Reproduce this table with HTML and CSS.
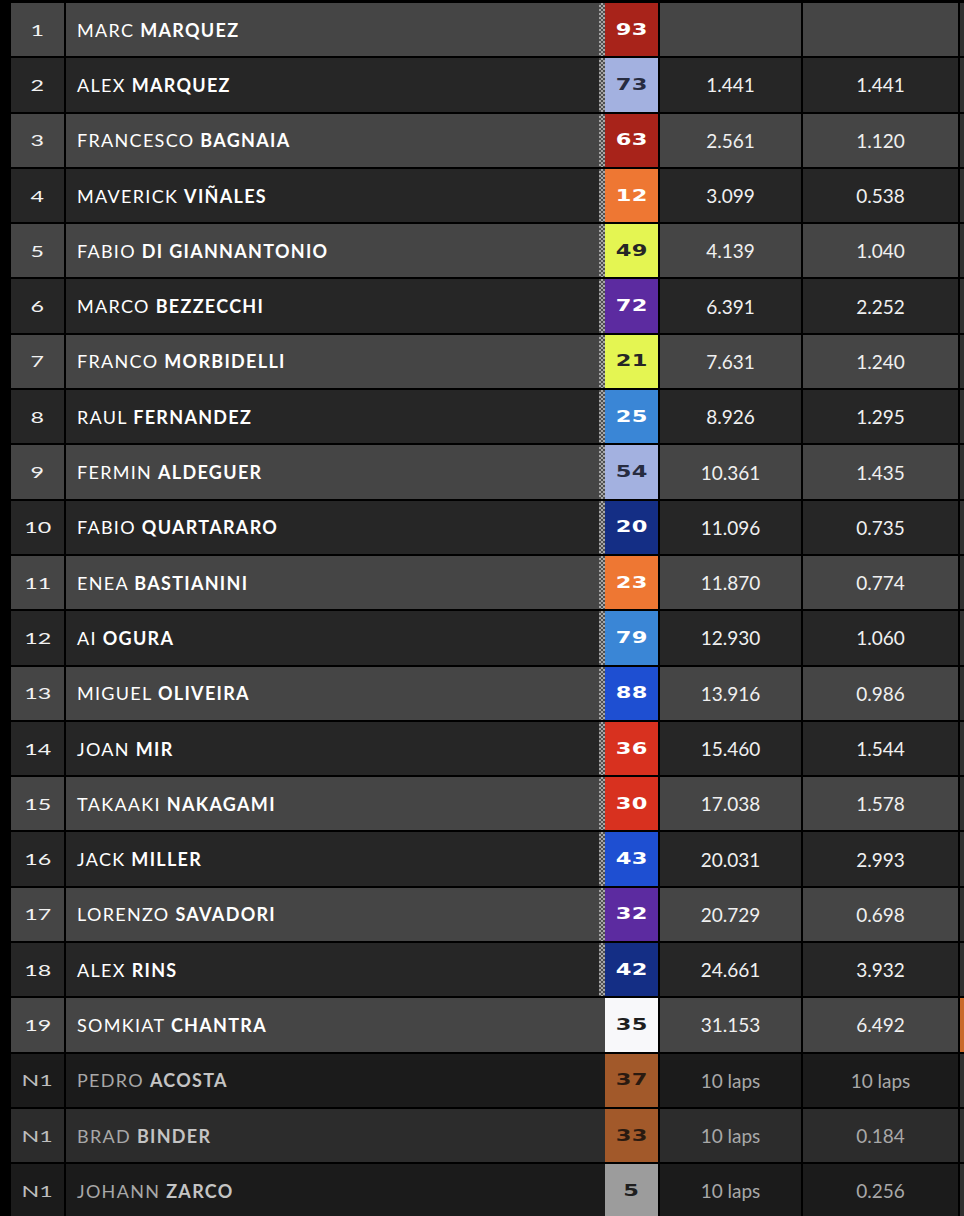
FILE: index.html
```html
<!DOCTYPE html>
<html lang="en">
<head>
<meta charset="utf-8">
<title>Race Classification</title>
<link rel="stylesheet" href="styles.css">
</head>
<body>
<div class="table">
  <div class="row light"><div class="pos"><span>1</span></div><div class="rider"><div class="name">MARC <b>MARQUEZ</b></div><div class="flag"></div><div class="num red"><span>93</span></div></div><div class="time"></div><div class="time"></div><div class="edge"></div></div>
  <div class="row dark"><div class="pos"><span>2</span></div><div class="rider"><div class="name">ALEX <b>MARQUEZ</b></div><div class="flag"></div><div class="num lav"><span>73</span></div></div><div class="time">1.441</div><div class="time">1.441</div><div class="edge"></div></div>
  <div class="row light"><div class="pos"><span>3</span></div><div class="rider"><div class="name">FRANCESCO <b>BAGNAIA</b></div><div class="flag"></div><div class="num red"><span>63</span></div></div><div class="time">2.561</div><div class="time">1.120</div><div class="edge"></div></div>
  <div class="row dark"><div class="pos"><span>4</span></div><div class="rider"><div class="name">MAVERICK <b>VIÑALES</b></div><div class="flag"></div><div class="num orange"><span>12</span></div></div><div class="time">3.099</div><div class="time">0.538</div><div class="edge"></div></div>
  <div class="row light"><div class="pos"><span>5</span></div><div class="rider"><div class="name">FABIO <b>DI GIANNANTONIO</b></div><div class="flag"></div><div class="num lime"><span>49</span></div></div><div class="time">4.139</div><div class="time">1.040</div><div class="edge"></div></div>
  <div class="row dark"><div class="pos"><span>6</span></div><div class="rider"><div class="name">MARCO <b>BEZZECCHI</b></div><div class="flag"></div><div class="num purple"><span>72</span></div></div><div class="time">6.391</div><div class="time">2.252</div><div class="edge"></div></div>
  <div class="row light"><div class="pos"><span>7</span></div><div class="rider"><div class="name">FRANCO <b>MORBIDELLI</b></div><div class="flag"></div><div class="num lime"><span>21</span></div></div><div class="time">7.631</div><div class="time">1.240</div><div class="edge"></div></div>
  <div class="row dark"><div class="pos"><span>8</span></div><div class="rider"><div class="name">RAUL <b>FERNANDEZ</b></div><div class="flag"></div><div class="num sky"><span>25</span></div></div><div class="time">8.926</div><div class="time">1.295</div><div class="edge"></div></div>
  <div class="row light"><div class="pos"><span>9</span></div><div class="rider"><div class="name">FERMIN <b>ALDEGUER</b></div><div class="flag"></div><div class="num lav"><span>54</span></div></div><div class="time">10.361</div><div class="time">1.435</div><div class="edge"></div></div>
  <div class="row dark"><div class="pos"><span>10</span></div><div class="rider"><div class="name">FABIO <b>QUARTARARO</b></div><div class="flag"></div><div class="num navy"><span>20</span></div></div><div class="time">11.096</div><div class="time">0.735</div><div class="edge"></div></div>
  <div class="row light"><div class="pos"><span>11</span></div><div class="rider"><div class="name">ENEA <b>BASTIANINI</b></div><div class="flag"></div><div class="num orange"><span>23</span></div></div><div class="time">11.870</div><div class="time">0.774</div><div class="edge"></div></div>
  <div class="row dark"><div class="pos"><span>12</span></div><div class="rider"><div class="name">AI <b>OGURA</b></div><div class="flag"></div><div class="num sky"><span>79</span></div></div><div class="time">12.930</div><div class="time">1.060</div><div class="edge"></div></div>
  <div class="row light"><div class="pos"><span>13</span></div><div class="rider"><div class="name">MIGUEL <b>OLIVEIRA</b></div><div class="flag"></div><div class="num royal"><span>88</span></div></div><div class="time">13.916</div><div class="time">0.986</div><div class="edge"></div></div>
  <div class="row dark"><div class="pos"><span>14</span></div><div class="rider"><div class="name">JOAN <b>MIR</b></div><div class="flag"></div><div class="num scarlet"><span>36</span></div></div><div class="time">15.460</div><div class="time">1.544</div><div class="edge"></div></div>
  <div class="row light"><div class="pos"><span>15</span></div><div class="rider"><div class="name">TAKAAKI <b>NAKAGAMI</b></div><div class="flag"></div><div class="num scarlet"><span>30</span></div></div><div class="time">17.038</div><div class="time">1.578</div><div class="edge"></div></div>
  <div class="row dark"><div class="pos"><span>16</span></div><div class="rider"><div class="name">JACK <b>MILLER</b></div><div class="flag"></div><div class="num royal"><span>43</span></div></div><div class="time">20.031</div><div class="time">2.993</div><div class="edge"></div></div>
  <div class="row light"><div class="pos"><span>17</span></div><div class="rider"><div class="name">LORENZO <b>SAVADORI</b></div><div class="flag"></div><div class="num purple"><span>32</span></div></div><div class="time">20.729</div><div class="time">0.698</div><div class="edge"></div></div>
  <div class="row dark"><div class="pos"><span>18</span></div><div class="rider"><div class="name">ALEX <b>RINS</b></div><div class="flag"></div><div class="num navy"><span>42</span></div></div><div class="time">24.661</div><div class="time">3.932</div><div class="edge"></div></div>
  <div class="row light"><div class="pos"><span>19</span></div><div class="rider"><div class="name">SOMKIAT <b>CHANTRA</b></div><div class="noflag"></div><div class="num white"><span>35</span></div></div><div class="time">31.153</div><div class="time">6.492</div><div class="edge orange-edge"></div></div>
  <div class="row out darkest"><div class="pos"><span>N1</span></div><div class="rider"><div class="name">PEDRO <b>ACOSTA</b></div><div class="noflag"></div><div class="num brown"><span>37</span></div></div><div class="time">10 laps</div><div class="time">10 laps</div><div class="edge"></div></div>
  <div class="row out mid"><div class="pos"><span>N1</span></div><div class="rider"><div class="name">BRAD <b>BINDER</b></div><div class="noflag"></div><div class="num brown"><span>33</span></div></div><div class="time">10 laps</div><div class="time">0.184</div><div class="edge"></div></div>
  <div class="row out darkest"><div class="pos"><span>N1</span></div><div class="rider"><div class="name">JOHANN <b>ZARCO</b></div><div class="noflag"></div><div class="num grey"><span>5</span></div></div><div class="time">10 laps</div><div class="time">0.256</div><div class="edge"></div></div>
</div>
</body>
</html>
```

FILE: styles.css
```css
html, body {
  margin: 0;
  padding: 0;
  background: #000;
}
body {
  width: 964px;
  height: 1216px;
  overflow: hidden;
}
.table {
  display: grid;
  grid-auto-rows: 53.3px;
  row-gap: 2px;
  padding: 3px 0 0 11px;
  font-family: "Lato", "Noto Sans", sans-serif;
  color: #fff;
}
.row {
  display: grid;
  grid-template-columns: 53px 592px 141px 155px 10px;
  column-gap: 2px;
}
.row > div { background: var(--bg); }
.light { --bg: #454545; }
.dark { --bg: #262626; }
.darkest { --bg: #1b1b1b; }
.mid { --bg: #2c2c2c; }

.pos {
  display: flex;
  align-items: center;
  justify-content: center;
}
.pos span {
  font-family: "Lato", sans-serif;
  font-size: 15px;
  font-weight: 400;
  display: inline-block;
  transform: scaleX(1.55);
  color: #f2f2f2;
}
.rider {
  display: flex;
}
.row > .rider { background: transparent; }
.name {
  flex: 1;
  background: var(--bg);
  display: flex;
  align-items: center;
  padding-left: 11px;
  font-size: 18px;
  font-weight: 400;
  letter-spacing: 1.3px;
  white-space: pre;
}
.name b { font-weight: 700; }
.flag {
  width: 6px;
  background: repeating-conic-gradient(#a6a6a6 0 25%, #4e4e4e 0 50%) 0 0 / 4px 4px;
}
.noflag {
  width: 6px;
  background: var(--bg);
}
.num {
  width: 53px;
  display: flex;
  align-items: center;
  justify-content: center;
}
.num span {
  font-family: "DejaVu Sans", sans-serif;
  font-weight: 700;
  font-size: 15px;
  display: inline-block;
  transform: scaleX(1.5);
  letter-spacing: 0.3px;
}
.red { background: #a8231a; color: #fff; }
.lav { background: #a3b1e0; color: #272c40; }
.orange { background: #ee7733; color: #fff; }
.lime { background: #e4f552; color: #262626; }
.purple { background: #5c2ba0; color: #fff; }
.sky { background: #3a86d6; color: #fff; }
.navy { background: #142e85; color: #fff; }
.royal { background: #1e4fd2; color: #fff; }
.scarlet { background: #d8311f; color: #fff; }
.white { background: #f8f8fa; color: #1e1e1e; }
.brown { background: #a2592a; color: #2a1a10; }
.grey { background: #9c9c9c; color: #1f1f1f; }

.time {
  display: flex;
  align-items: center;
  justify-content: center;
  font-family: "Lato", sans-serif;
  font-size: 19px;
  color: #f0f0f0;
}
.row > .edge { background: #303030; }
.row > .orange-edge { background: #c96a2b; }

.out .name, .out .time { color: #a8a8a8; }
.out .name b { color: #c4c4c4; }
.out .pos span { color: #bdbdbd; }
```
